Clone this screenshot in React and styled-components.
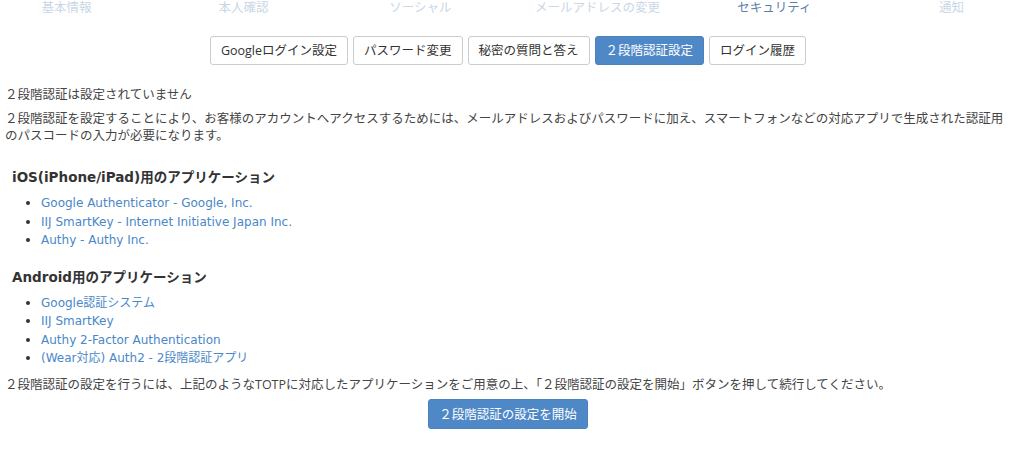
import React from "react";
import styled, { createGlobalStyle } from "styled-components";

const Global = createGlobalStyle`
  html, body { margin: 0; padding: 0; background: #fff; }
  body {
    font-family: "Open Sans", "Noto Sans CJK JP", sans-serif;
    font-size: 12.5px;
    color: #444;
    overflow: hidden;
  }
`;

const Page = styled.div`
  width: 1024px;
  overflow: hidden;
  padding: 0 13px 0 5px;
  box-sizing: border-box;
`;

const Nav = styled.nav`
  display: grid;
  grid-template-columns: repeat(6, 177px);
  margin-left: -27px;
  width: 1062px;
  margin-top: -1px;
`;

const NavItem = styled.a`
  text-align: center;
  font-size: 12.5px;
  line-height: 18px;
  color: ${(p) => (p.$active ? "#5b7fa6" : "#c9d7e6")};
  text-decoration: none;
`;

const ButtonRow = styled.div`
  display: flex;
  justify-content: center;
  gap: 5px;
  margin-top: 19px;
`;

const TabButton = styled.button`
  height: 29px;
  padding: 0 10px;
  border: 1px solid ${(p) => (p.$active ? "#4a82bf" : "#cccccc")};
  border-radius: 3px;
  background: ${(p) => (p.$active ? "#4f88c6" : "#fff")};
  color: ${(p) => (p.$active ? "#fff" : "#333")};
  font-family: "Open Sans", "Noto Sans CJK JP", sans-serif;
  font-size: 12.5px;
  line-height: 27px;
  cursor: pointer;
`;

const Status = styled.p`
  margin: 21px 0 0;
  line-height: 18px;
`;

const Para = styled.p`
  margin: 6px 0 0;
  line-height: 17px;
`;

const Heading = styled.h3`
  margin: ${(p) => p.$mt}px 0 0 7px;
  font-family: "DejaVu Sans", "Noto Sans CJK JP", sans-serif;
  font-weight: bold;
  font-size: 13.5px;
  line-height: 20px;
  color: #333;
`;

const List = styled.ul`
  margin: 7px 0 0;
  padding-left: 36px;
  list-style: disc;
`;

const Item = styled.li`
  line-height: 18.5px;
  color: #333;
`;

const Link = styled.a`
  color: #4a87c8;
  text-decoration: none;
  font-family: "DejaVu Sans", "Noto Sans CJK JP", sans-serif;
  font-size: 12px;
`;

const Footer = styled.p`
  margin: 8px 0 0;
  line-height: 18px;
`;

const StartRow = styled.div`
  display: flex;
  justify-content: center;
  margin-top: 5px;
`;

const StartButton = styled.button`
  width: 160px;
  height: 30px;
  border: 1px solid #4a82bf;
  border-radius: 3px;
  background: #4f88c6;
  color: #fff;
  font-family: "Open Sans", "Noto Sans CJK JP", sans-serif;
  font-size: 12.5px;
  cursor: pointer;
`;

const navs = ["基本情報", "本人確認", "ソーシャル", "メールアドレスの変更", "セキュリティ", "通知"];
const tabs = ["Googleログイン設定", "パスワード変更", "秘密の質問と答え", "２段階認証設定", "ログイン履歴"];
const ios = [
  "Google Authenticator - Google, Inc.",
  "IIJ SmartKey - Internet Initiative Japan Inc.",
  "Authy - Authy Inc.",
];
const android = [
  "Google認証システム",
  "IIJ SmartKey",
  "Authy 2-Factor Authentication",
  "(Wear対応) Auth2 - 2段階認証アプリ",
];

export default function App() {
  return (
    <Page>
      <Global />
      <Nav>
        {navs.map((n) => (
          <NavItem key={n} $active={n === "セキュリティ"}>{n}</NavItem>
        ))}
      </Nav>
      <ButtonRow>
        {tabs.map((t) => (
          <TabButton key={t} $active={t === "２段階認証設定"}>{t}</TabButton>
        ))}
      </ButtonRow>
      <Status>２段階認証は設定されていません</Status>
      <Para>
        ２段階認証を設定することにより、お客様のアカウントへアクセスするためには、メールアドレスおよびパスワードに加え、スマートフォンなどの対応アプリで生成された認証用のパスコードの入力が必要になります。
      </Para>
      <Heading $mt={23}>iOS(iPhone/iPad)用のアプリケーション</Heading>
      <List>
        {ios.map((a) => (
          <Item key={a}><Link href="#">{a}</Link></Item>
        ))}
      </List>
      <Heading $mt={17}>Android用のアプリケーション</Heading>
      <List>
        {android.map((a) => (
          <Item key={a}><Link href="#">{a}</Link></Item>
        ))}
      </List>
      <Footer>
        ２段階認証の設定を行うには、上記のようなTOTPに対応したアプリケーションをご用意の上、「２段階認証の設定を開始」ボタンを押して続行してください。
      </Footer>
      <StartRow>
        <StartButton>２段階認証の設定を開始</StartButton>
      </StartRow>
    </Page>
  );
}
